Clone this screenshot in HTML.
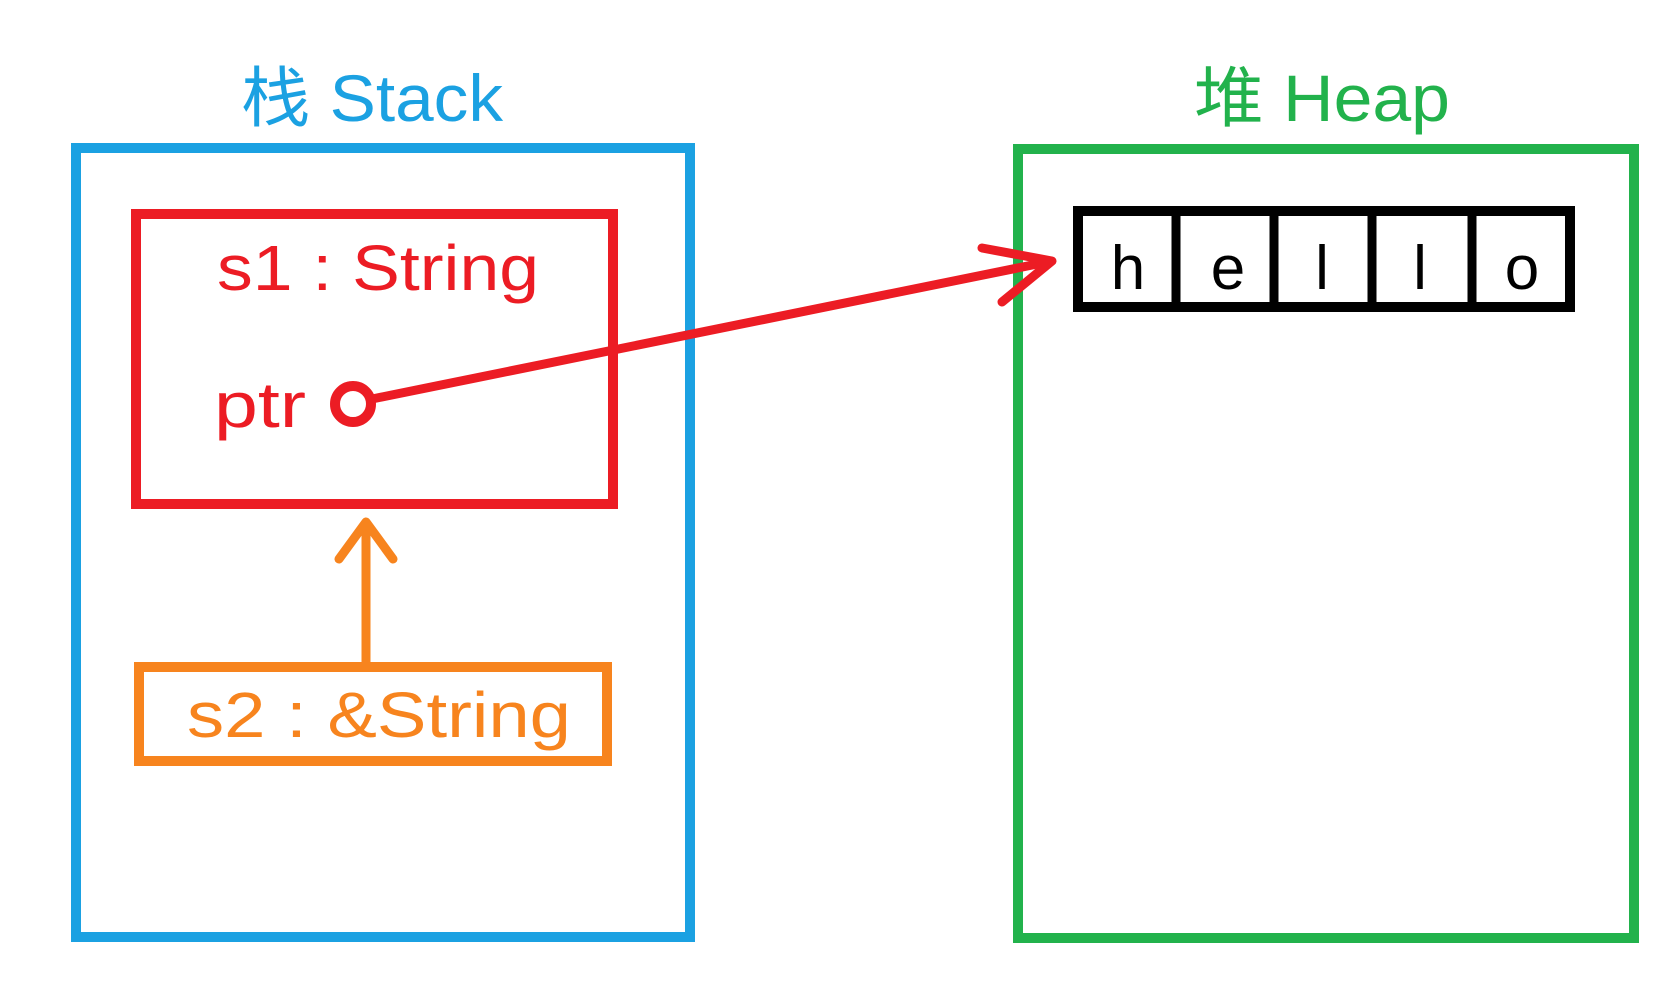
<!DOCTYPE html>
<html><head><meta charset="utf-8"><style>
html,body{margin:0;padding:0;background:#fff;width:1666px;height:984px;overflow:hidden}
svg text{font-family:"Liberation Sans","Noto Sans CJK SC",sans-serif}
</style></head><body>
<svg width="1666" height="984" viewBox="0 0 1666 984" xmlns="http://www.w3.org/2000/svg">
<text x="372" y="121" font-size="66" fill="#1ba1e2" text-anchor="middle" textLength="262" lengthAdjust="spacingAndGlyphs">栈 Stack</text>
<text x="1322" y="121" font-size="66" fill="#22b24c" text-anchor="middle" textLength="256" lengthAdjust="spacingAndGlyphs">堆 Heap</text>
<rect x="76" y="148" width="614" height="789" fill="none" stroke="#1ba1e2" stroke-width="10"/>
<rect x="1018" y="149" width="616" height="789" fill="none" stroke="#22b24c" stroke-width="10"/>
<rect x="136" y="214" width="477" height="290" fill="none" stroke="#ec1c24" stroke-width="10"/>
<text x="217" y="290" font-size="64" fill="#ec1c24" textLength="322" lengthAdjust="spacingAndGlyphs">s1 : String</text>
<text x="214" y="427" font-size="64" fill="#ec1c24" textLength="92" lengthAdjust="spacingAndGlyphs">ptr</text>
<circle cx="353" cy="404" r="18" fill="none" stroke="#ec1c24" stroke-width="10"/>
<line x1="372" y1="399" x2="1052" y2="261" stroke="#ec1c24" stroke-width="9"/>
<polyline points="982,248 1052,261 1002,302" fill="none" stroke="#ec1c24" stroke-width="9" stroke-linecap="round" stroke-linejoin="round"/>
<rect x="139" y="667" width="468" height="94" fill="none" stroke="#f7841e" stroke-width="10"/>
<text x="187" y="737" font-size="64" fill="#f7841e" textLength="384" lengthAdjust="spacingAndGlyphs">s2 : &amp;String</text>
<line x1="366" y1="662" x2="366" y2="522" stroke="#f7841e" stroke-width="9"/>
<polyline points="339,559 366,522 393,559" fill="none" stroke="#f7841e" stroke-width="9" stroke-linecap="round" stroke-linejoin="round"/>
<rect x="1078" y="211" width="492" height="96" fill="none" stroke="#000" stroke-width="10"/>
<g stroke="#000" stroke-width="9"><line x1="1176" y1="211" x2="1176" y2="307"/><line x1="1274" y1="211" x2="1274" y2="307"/><line x1="1372" y1="211" x2="1372" y2="307"/><line x1="1472" y1="211" x2="1472" y2="307"/></g>
<g font-size="62" fill="#000" text-anchor="middle"><text x="1128" y="289">h</text><text x="1228" y="289">e</text><text x="1322" y="289">l</text><text x="1420" y="289">l</text><text x="1522" y="289">o</text></g>
</svg>
</body></html>
